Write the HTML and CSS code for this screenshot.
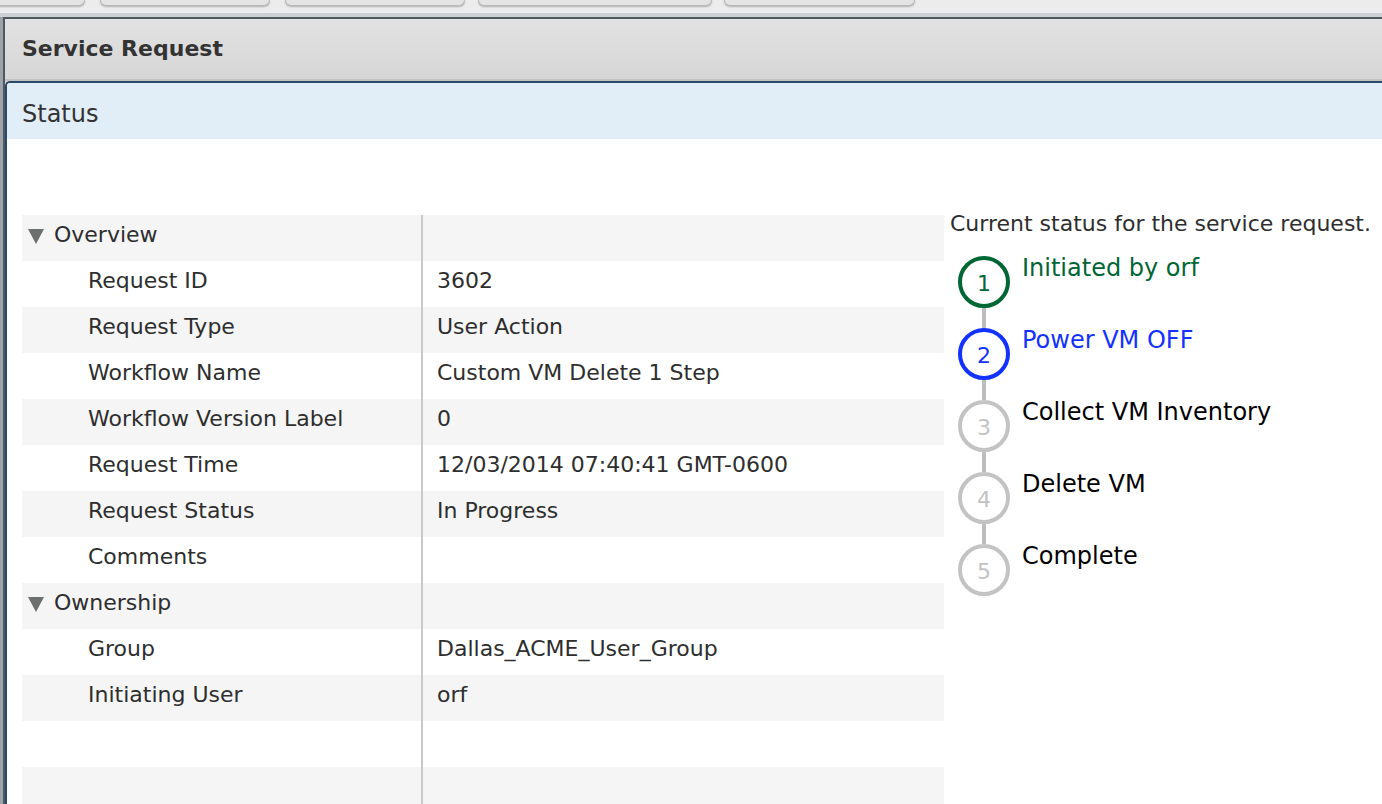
FILE: index.html
```html
<!DOCTYPE html>
<html>
<head>
<meta charset="utf-8">
<title>Service Request</title>
<link rel="stylesheet" href="styles.css">
</head>
<body>
<div class="topbar">
  <div class="tab tab-1"></div>
  <div class="tab tab-2"></div>
  <div class="tab tab-3"></div>
  <div class="tab tab-4"></div>
  <div class="tab tab-5"></div>
</div>
<div class="sep"></div>
<div class="shell">
  <div class="window">
    <div class="titlebar">Service Request</div>
    <div class="panel">
      <div class="panel-head">Status</div>
      <div class="panel-body">
        <div class="details">
          <div class="row alt group">
            <div class="cell-label"><svg class="caret" width="16" height="15" viewBox="0 0 16 15"><polygon points="0,0 16,0 8,15" fill="#6b706f"/></svg>Overview</div>
            <div class="cell-value"></div>
          </div>
          <div class="row">
            <div class="cell-label child">Request ID</div>
            <div class="cell-value">3602</div>
          </div>
          <div class="row alt">
            <div class="cell-label child">Request Type</div>
            <div class="cell-value">User Action</div>
          </div>
          <div class="row">
            <div class="cell-label child">Workflow Name</div>
            <div class="cell-value">Custom VM Delete 1 Step</div>
          </div>
          <div class="row alt">
            <div class="cell-label child">Workflow Version Label</div>
            <div class="cell-value">0</div>
          </div>
          <div class="row">
            <div class="cell-label child">Request Time</div>
            <div class="cell-value">12/03/2014 07:40:41 GMT-0600</div>
          </div>
          <div class="row alt">
            <div class="cell-label child">Request Status</div>
            <div class="cell-value">In Progress</div>
          </div>
          <div class="row">
            <div class="cell-label child">Comments</div>
            <div class="cell-value"></div>
          </div>
          <div class="row alt group">
            <div class="cell-label"><svg class="caret" width="16" height="15" viewBox="0 0 16 15"><polygon points="0,0 16,0 8,15" fill="#6b706f"/></svg>Ownership</div>
            <div class="cell-value"></div>
          </div>
          <div class="row">
            <div class="cell-label child">Group</div>
            <div class="cell-value">Dallas_ACME_User_Group</div>
          </div>
          <div class="row alt">
            <div class="cell-label child">Initiating User</div>
            <div class="cell-value">orf</div>
          </div>
          <div class="row">
            <div class="cell-label child"></div>
            <div class="cell-value"></div>
          </div>
          <div class="row alt">
            <div class="cell-label child"></div>
            <div class="cell-value"></div>
          </div>
        </div>
        <div class="progress">
          <div class="progress-title">Current status for the service request.</div>
          <div class="step done">
            <div class="marker"><div class="circle">1</div><div class="connector"></div></div>
            <div class="step-label">Initiated by orf</div>
          </div>
          <div class="step active">
            <div class="marker"><div class="circle">2</div><div class="connector"></div></div>
            <div class="step-label">Power VM OFF</div>
          </div>
          <div class="step">
            <div class="marker"><div class="circle">3</div><div class="connector"></div></div>
            <div class="step-label">Collect VM Inventory</div>
          </div>
          <div class="step">
            <div class="marker"><div class="circle">4</div><div class="connector"></div></div>
            <div class="step-label">Delete VM</div>
          </div>
          <div class="step">
            <div class="marker"><div class="circle">5</div></div>
            <div class="step-label">Complete</div>
          </div>
        </div>
      </div>
    </div>
  </div>
</div>
</body>
</html>
```
FILE: styles.css
```css
html, body {
  margin: 0;
  padding: 0;
  height: 100%;
  overflow: hidden;
}
body {
  background: #ececec;
  font-family: "DejaVu Sans", Verdana, sans-serif;
  color: #2e2e2e;
}
.topbar {
  height: 13px;
  display: flex;
  align-items: flex-start;
  background: #ececec;
  overflow: hidden;
}
.tab {
  height: 6px;
  box-sizing: border-box;
  background: #e4e4e4;
  border: 1px solid #b8b8b8;
  border-top: none;
  border-radius: 0 0 6px 6px;
  box-shadow: 0 1px 2px rgba(0, 0, 0, 0.25);
  flex: none;
}
.tab-1 { width: 95px; margin-left: -10px; }
.tab-2 { width: 170px; margin-left: 15px; }
.tab-3 { width: 180px; margin-left: 15px; }
.tab-4 { width: 234px; margin-left: 13px; }
.tab-5 { width: 191px; margin-left: 12px; }
.sep {
  height: 4px;
  background: #cdd1d6;
}
.shell {
  background: #9da3a9;
  padding-left: 3px;
  height: 100%;
}
.window {
  border-top: 2px solid #4f5860;
  border-left: 2px solid #4f5860;
  background: #d9d9d9;
  height: 100%;
}
.titlebar {
  height: 62px;
  box-sizing: border-box;
  padding: 17px 0 0 17px;
  background: linear-gradient(#e2e2e2, #d6d6d6);
  border-bottom: 2px solid #c2c2c2;
  font-weight: bold;
  font-size: 22px;
  line-height: 26px;
  color: #333;
}
.panel {
  background: #fff;
  border-top: 2px solid #2b4a6b;
  border-left: 2px solid #2b4a6b;
  border-top-left-radius: 5px;
  height: 100%;
}
.panel-head {
  height: 56px;
  box-sizing: border-box;
  background: #e1eef7;
  padding: 17px 0 0 15px;
  font-size: 24px;
  line-height: 28px;
  color: #333;
  border-top-left-radius: 3px;
}
.panel-body {
  display: flex;
  align-items: flex-start;
  padding: 76px 0 0 15px;
}
.details {
  width: 922px;
  flex: none;
}
.row {
  display: flex;
  height: 46px;
  font-size: 22px;
  line-height: 26px;
  color: #2e2e2e;
}
.row.alt {
  background: #f5f5f5;
}
.cell-label {
  width: 399px;
  box-sizing: border-box;
  padding: 7px 0 0 6px;
  display: flex;
  align-items: flex-start;
  white-space: nowrap;
}
.cell-label.child {
  padding-left: 66px;
}
.caret {
  margin: 7px 10px 0 0;
  flex: none;
}
.cell-value {
  flex: 1;
  border-left: 2px solid #c9c9c9;
  padding: 7px 0 0 14px;
  white-space: nowrap;
}
.progress {
  margin: -4px 0 0 6px;
  white-space: nowrap;
}
.progress-title {
  font-size: 22px;
  line-height: 26px;
  color: #2e2e2e;
  margin-bottom: 19px;
}
.step {
  display: flex;
  align-items: flex-start;
  color: #000;
  --ring: #c3c3c3;
}
.step.done { color: #006633; --ring: #006633; }
.step.active { color: #1432ff; --ring: #1432ff; }
.marker {
  display: flex;
  flex-direction: column;
  margin-left: 8px;
}
.circle {
  width: 52px;
  height: 52px;
  box-sizing: border-box;
  border: 4px solid var(--ring);
  border-radius: 50%;
  display: flex;
  align-items: center;
  justify-content: center;
  font-size: 22px;
  padding-top: 3px;
  color: var(--ring);
}
.connector {
  width: 4px;
  height: 20px;
  margin-left: 24px;
  background: #bdbdbd;
}
.step-label {
  margin: -2px 0 0 12px;
  font-size: 24px;
  line-height: 28px;
}
```
